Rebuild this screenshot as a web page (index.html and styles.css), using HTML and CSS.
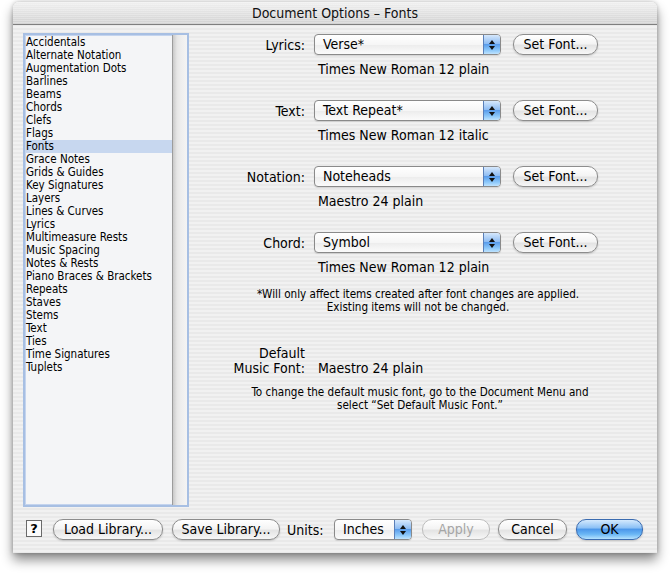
FILE: index.html
```html
<!DOCTYPE html>
<html>
<head>
<meta charset="utf-8">
<title>Document Options - Fonts</title>
<link rel="stylesheet" href="styles.css">
</head>
<body>
<div class="window">
  <div class="titlebar">Document Options – Fonts</div>
  <div class="content">
    <div class="main">
      <div class="list">
        <ul class="items">
          <li>Accidentals</li>
          <li>Alternate Notation</li>
          <li>Augmentation Dots</li>
          <li>Barlines</li>
          <li>Beams</li>
          <li>Chords</li>
          <li>Clefs</li>
          <li>Flags</li>
          <li class="selected">Fonts</li>
          <li>Grace Notes</li>
          <li>Grids &amp; Guides</li>
          <li>Key Signatures</li>
          <li>Layers</li>
          <li>Lines &amp; Curves</li>
          <li>Lyrics</li>
          <li>Multimeasure Rests</li>
          <li>Music Spacing</li>
          <li>Notes &amp; Rests</li>
          <li>Piano Braces &amp; Brackets</li>
          <li>Repeats</li>
          <li>Staves</li>
          <li>Stems</li>
          <li>Text</li>
          <li>Ties</li>
          <li>Time Signatures</li>
          <li>Tuplets</li>
        </ul>
        <div class="track"></div>
      </div>
      <div class="pane">
        <div class="group">
          <div class="row">
            <span class="label">Lyrics:</span>
            <div class="popup wide"><span class="ptext">Verse*</span><span class="arrows"><i class="up"></i><i class="down"></i></span></div>
            <div class="btn setfont">Set Font...</div>
          </div>
          <div class="desc">Times New Roman 12 plain</div>
        </div>
        <div class="group">
          <div class="row">
            <span class="label">Text:</span>
            <div class="popup wide"><span class="ptext">Text Repeat*</span><span class="arrows"><i class="up"></i><i class="down"></i></span></div>
            <div class="btn setfont">Set Font...</div>
          </div>
          <div class="desc">Times New Roman 12 italic</div>
        </div>
        <div class="group">
          <div class="row">
            <span class="label">Notation:</span>
            <div class="popup wide"><span class="ptext">Noteheads</span><span class="arrows"><i class="up"></i><i class="down"></i></span></div>
            <div class="btn setfont">Set Font...</div>
          </div>
          <div class="desc">Maestro 24 plain</div>
        </div>
        <div class="group">
          <div class="row">
            <span class="label">Chord:</span>
            <div class="popup wide"><span class="ptext">Symbol</span><span class="arrows"><i class="up"></i><i class="down"></i></span></div>
            <div class="btn setfont">Set Font...</div>
          </div>
          <div class="desc">Times New Roman 12 plain</div>
        </div>
        <div class="note">*Will only affect items created after font changes are applied.<br>Existing items will not be changed.</div>
        <div class="default">
          <span class="dlabel">Default</span><span></span>
          <span class="dlabel">Music Font:</span><span class="dvalue">Maestro 24 plain</span>
        </div>
        <div class="note change">To change the default music font, go to the Document Menu and<br>select “Set Default Music Font.”</div>
      </div>
    </div>
    <div class="bottom">
      <div class="help">?</div>
      <div class="btn load">Load Library...</div>
      <div class="btn save">Save Library...</div>
      <span class="units">Units:</span>
      <div class="popup inches"><span class="ptext">Inches</span><span class="arrows"><i class="up"></i><i class="down"></i></span></div>
      <div class="btn apply">Apply</div>
      <div class="btn cancel">Cancel</div>
      <div class="btn ok">OK</div>
    </div>
  </div>
</div>
</body>
</html>
```
FILE: styles.css
```css
html, body {
  margin: 0;
  padding: 0;
  background: #ffffff;
}
body {
  font-family: "DejaVu Sans Condensed", "DejaVu Sans", sans-serif;
  font-size: 14px;
  color: #000;
  width: 670px;
  height: 577px;
  overflow: hidden;
}
.window {
  margin: 2px 0 0 13px;
  width: 644px;
  height: 551px;
  border-radius: 6px 6px 0 0;
  box-shadow: 0 7px 12px rgba(0, 0, 0, 0.45), 0 0 4px rgba(0, 0, 0, 0.25);
  background: repeating-linear-gradient(to bottom, #f1f1f1 0, #f1f1f1 2px, #e9e9e9 2px, #e9e9e9 4px);
  display: flex;
  flex-direction: column;
}
.titlebar {
  height: 22px;
  line-height: 22px;
  text-align: center;
  font-size: 14px;
  border-radius: 6px 6px 0 0;
  border-bottom: 1px solid #7e7e7e;
  background:
    repeating-linear-gradient(to bottom, rgba(255,255,255,0.25) 0, rgba(255,255,255,0.25) 1px, rgba(0,0,0,0) 1px, rgba(0,0,0,0) 2px),
    linear-gradient(to bottom, #f0f0f0, #d2d2d2);
  color: #111;
}
.content {
  flex: 1;
  display: flex;
  flex-direction: column;
}
.main {
  display: flex;
  padding: 8px 0 0 10px;
}
.list {
  width: 162px;
  height: 470px;
  border: 2px solid #a7bfe3;
  box-shadow: inset 0 0 0 1px #c4d4ee;
  display: flex;
  background: #f4f5f7;
}
.items {
  list-style: none;
  margin: 0;
  padding: 1px 0 0 0;
  width: 147px;
  font-size: 11.5px;
  border-right: 1px solid #9c9c9c;
}
.items li {
  height: 13px;
  line-height: 13px;
  padding-left: 1px;
  white-space: nowrap;
}
.items li.selected {
  background: #c7d7ef;
}
.track {
  flex: 1;
  background: linear-gradient(to right, #c9c9c9, #e6e6e6 4px, #eeeeee 8px, #f4f4f4);
}
.pane {
  flex: 1;
  padding: 1px 10px 0 0;
}
.group {
  margin-bottom: 23px;
}
.group:nth-child(4) {
  margin-bottom: 0;
}
.row {
  display: flex;
  align-items: center;
  height: 21px;
}
.label {
  width: 116px;
  text-align: right;
  flex: none;
}
.popup {
  position: relative;
  height: 19px;
  border: 1px solid #8a8a8a;
  border-radius: 4px;
  background: linear-gradient(to bottom, #ffffff, #f6f6f6 50%, #ececec 51%, #fbfbfb);
  display: flex;
  align-items: center;
  box-sizing: content-box;
  overflow: hidden;
  box-shadow: 0 1px 1px rgba(0,0,0,0.12);
  flex: none;
}
.popup.wide {
  width: 185px;
  margin-left: 9px;
}
.ptext {
  flex: 1;
  padding-left: 8px;
  line-height: 19px;
  white-space: nowrap;
}
.arrows {
  width: 16px;
  height: 19px;
  border-left: 1px solid #5a7fb8;
  background: linear-gradient(to bottom, #d6e8fc 0%, #8fbdf3 45%, #5a9deb 50%, #8cc8fa 80%, #bfe3fe 100%);
  display: flex;
  flex-direction: column;
  align-items: center;
  justify-content: center;
  gap: 2px;
}
.arrows i {
  display: block;
  width: 0;
  height: 0;
  border-left: 3px solid transparent;
  border-right: 3px solid transparent;
}
.arrows .up {
  border-bottom: 4px solid #111;
}
.arrows .down {
  border-top: 4px solid #111;
}
.btn {
  height: 19px;
  line-height: 19px;
  border: 1px solid #8d8d8d;
  border-radius: 10px;
  text-align: center;
  background: linear-gradient(to bottom, #ffffff 0%, #f4f4f4 45%, #e4e4e4 55%, #f7f7f7 100%);
  box-shadow: 0 1px 2px rgba(0,0,0,0.18);
  white-space: nowrap;
  flex: none;
}
.btn.setfont {
  width: 83px;
  margin-left: 12px;
}
.desc {
  margin-top: 6px;
  padding-left: 129px;
  line-height: 16px;
}
.note {
  margin-top: 13px;
  text-align: center;
  font-size: 11.6px;
  line-height: 13px;
}
.default {
  margin-top: 32px;
  display: grid;
  grid-template-columns: 116px auto;
  line-height: 15px;
}
.dlabel {
  text-align: right;
}
.dvalue {
  padding-left: 13px;
}
.note.change {
  margin-top: 10px;
  padding-left: 4px;
}
.bottom {
  display: flex;
  align-items: center;
  height: 21px;
  margin-top: 12px;
  padding-left: 13px;
}
.help {
  width: 14px;
  height: 15px;
  border: 1px solid #6a6a6a;
  background: #fbfbfb;
  font-family: "DejaVu Sans", sans-serif;
  font-weight: bold;
  font-size: 13px;
  line-height: 15px;
  text-align: center;
  margin-top: -3px;
  flex: none;
}
.btn.load {
  width: 108px;
  margin-left: 11px;
}
.btn.save {
  width: 106px;
  margin-left: 9px;
}
.units {
  width: 40px;
  margin-left: 7px;
  flex: none;
}
.popup.inches {
  width: 76px;
  margin-left: 7px;
}
.btn.apply {
  width: 66px;
  margin-left: 10px;
  color: #a5a5a5;
  border-color: #bdbdbd;
  box-shadow: none;
}
.btn.cancel {
  width: 67px;
  margin-left: 8px;
}
.btn.ok {
  width: 65px;
  margin-left: 9px;
  border-color: #3a6bb0;
  background: linear-gradient(to bottom, #d4e9fd 0%, #8ec2f6 40%, #4d98ea 50%, #6bb7f5 75%, #b5e2fe 100%);
}
```
